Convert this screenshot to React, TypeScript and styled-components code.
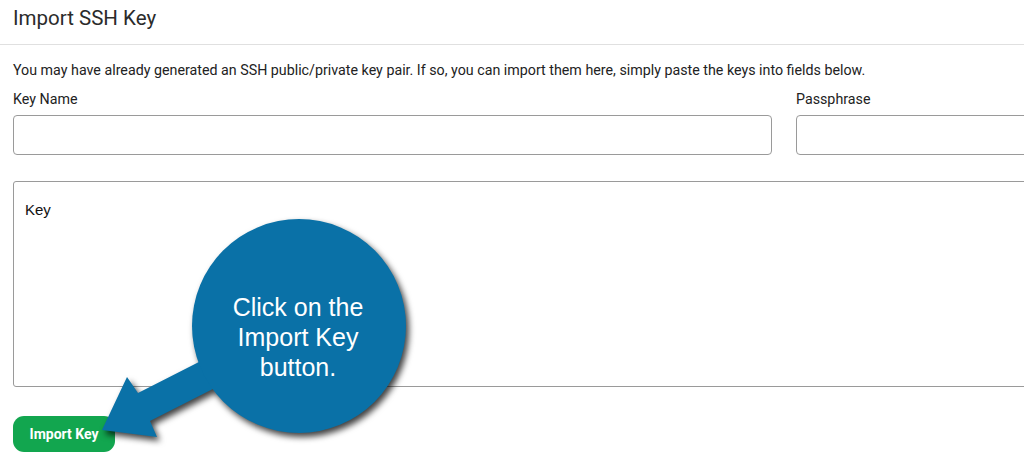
import React from "react";
import styled, { createGlobalStyle } from "styled-components";

const Global = createGlobalStyle`
  html, body { margin: 0; padding: 0; background: #fff; overflow: hidden; }
  body { font-family: Roboto, "Liberation Sans", sans-serif; color: #222; }
  * { box-sizing: border-box; }
`;

const Page = styled.div`
  position: relative;
  width: 1024px;
  height: 456px;
  overflow: hidden;
`;

const Header = styled.div`
  height: 45px;
  border-bottom: 1px solid #e0e0e0;
  padding: 5px 13px 0;
`;

const Title = styled.h1`
  margin: 0;
  font-size: 20.5px;
  font-weight: 400;
  color: #2b2b2b;
  line-height: 26px;
`;

const Body = styled.div`
  width: 1080px;
  padding: 15px 0 0 13px;
  display: flex;
  flex-direction: column;
`;

const Intro = styled.p`
  margin: 0;
  font-size: 14.25px;
  line-height: 20px;
  color: #222;
`;

const FieldRow = styled.div`
  display: grid;
  grid-template-columns: 759px 1fr;
  column-gap: 24px;
  margin-top: 10px;
`;

const Field = styled.div`
  display: flex;
  flex-direction: column;
`;

const Label = styled.label`
  font-size: 14.25px;
  line-height: 18px;
  color: #222;
  margin-bottom: 7px;
`;

const Input = styled.input`
  height: 40px;
  border: 1px solid #9a9a9a;
  border-radius: 4px;
  background: #fff;
  outline: none;
  font: inherit;
`;

const KeyArea = styled.textarea`
  margin-top: 26px;
  height: 206px;
  border: 1px solid #9a9a9a;
  border-radius: 3px;
  resize: none;
  padding: 19px 11px;
  font-family: "Liberation Sans", Arial, sans-serif;
  font-size: 15px;
  line-height: 18px;
  color: #111;
  outline: none;
  &::placeholder { color: #111; opacity: 1; }
`;

const Actions = styled.div`
  margin-top: 29px;
`;

const PrimaryButton = styled.button`
  width: 102px;
  height: 36px;
  border: none;
  border-radius: 11px;
  background: #12a64f;
  color: #fff;
  font-family: Roboto, "Liberation Sans", sans-serif;
  font-weight: 700;
  font-size: 14px;
  padding: 0;
  cursor: pointer;
`;

const Callout = styled.div`
  position: absolute;
  left: 0;
  top: 0;
  width: 1024px;
  height: 456px;
  pointer-events: none;
`;

const CalloutArt = styled.svg`
  position: absolute;
  left: 0;
  top: 0;
  filter: drop-shadow(3px 4px 3px rgba(0, 0, 0, 0.75));
`;

const CalloutText = styled.div`
  position: absolute;
  left: 188px;
  top: 292px;
  width: 220px;
  text-align: center;
  font-family: "Liberation Sans", Arial, sans-serif;
  font-size: 25px;
  line-height: 30px;
  color: #fff;
`;

export default function App() {
  return (
    <Page>
      <Global />
      <Header>
        <Title>Import SSH Key</Title>
      </Header>
      <Body>
        <Intro>
          You may have already generated an SSH public/private key pair. If so, you can import them here, simply paste the keys into fields below.
        </Intro>
        <FieldRow>
          <Field>
            <Label>Key Name</Label>
            <Input />
          </Field>
          <Field>
            <Label>Passphrase</Label>
            <Input />
          </Field>
        </FieldRow>
        <KeyArea placeholder="Key" />
        <Actions>
          <PrimaryButton>Import Key</PrimaryButton>
        </Actions>
      </Body>
      <Callout>
        <CalloutArt width="1024" height="456" viewBox="0 0 1024 456">
          <g fill="#0a71a7">
            <polygon points="102,430 127,377 138,393 250,336 262,364 150,421 157,437" />
            <circle cx="299" cy="326" r="107" />
          </g>
        </CalloutArt>
        <CalloutText>
          Click on the
          <br />
          Import Key
          <br />
          button.
        </CalloutText>
      </Callout>
    </Page>
  );
}
